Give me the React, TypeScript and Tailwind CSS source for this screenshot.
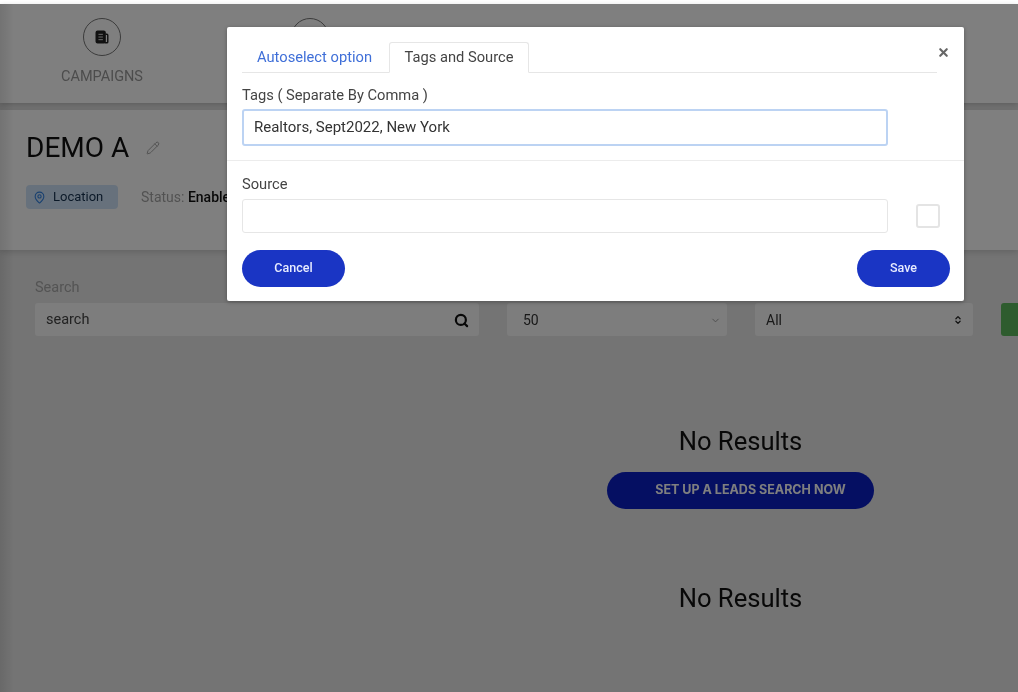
import React from 'react';
import { ChevronDown, ChevronsUpDown, MapPin, Pencil, Search, X } from 'lucide-react';

function NavItem({ label, children }: { label: string; children?: React.ReactNode }) {
    return (
        <div className="flex w-[128px] flex-col items-center">
            <div className="flex h-[38px] w-[38px] items-center justify-center rounded-full border-[1.5px] border-[#777]">
                {children}
            </div>
            <span className="mt-[13px] text-[14.5px] leading-[16px] text-[#999]">{label}</span>
        </div>
    );
}

function PageBehind() {
    return (
        <div className="flex h-[688px] flex-col bg-[#e8e8e8]">
            <div className="flex h-[99px] gap-[80px] bg-white pl-[38px] pt-[14px] shadow-[0_2px_6px_rgba(0,0,0,0.2)]">
                <NavItem label="CAMPAIGNS">
                    <svg width="16" height="16" viewBox="0 0 18 18" fill="none" stroke="#222" strokeWidth="1.6">
                        <rect x="2.5" y="2.5" width="10" height="13" rx="1.5" fill="#222" />
                        <path d="M13 6h1.5a1 1 0 0 1 1 1v7.5a1 1 0 0 1-1 1H12" />
                        <path d="M5 6h5M5 9h5M5 12h5" stroke="#ececec" strokeWidth="1" />
                    </svg>
                </NavItem>
                <NavItem label="" />
            </div>

            <div className="mt-[7px] h-[140px] bg-white pl-[26px] pt-[22px] shadow-[0_2px_6px_rgba(0,0,0,0.15)]">
                <div className="flex items-center gap-[17px]">
                    <h1 className="text-[28px] leading-[32px] text-[#111]">DEMO A</h1>
                    <Pencil size={14} strokeWidth={1.5} className="text-[#999]" />
                </div>
                <div className="mt-[21px] flex items-center gap-[23px]">
                    <div className="flex h-[24px] w-[92px] items-center gap-[7px] rounded-[4px] bg-[#cfe3f8] pl-[7px] text-[13px] text-[#15304f]">
                        <MapPin size={13} strokeWidth={2} className="text-[#2f7fe0]" />
                        Location
                    </div>
                    <div className="whitespace-nowrap text-[14px] text-[#a5a5a5]">
                        Status: <span className="font-medium text-[#111]">Enabled</span>
                    </div>
                </div>
            </div>

            <div className="flex gap-[28px] pl-[35px] pt-[28px]">
                <div className="w-[444px]">
                    <div className="text-[14.5px] leading-[20px] text-[#a8a8a8]">Search</div>
                    <div className="mt-[5px] flex h-[33px] items-center justify-between rounded-[3px] bg-[#fafafa] pl-[11px] pr-[10px] pt-[1px] text-[14.5px] text-[#444]">
                        search
                        <Search size={15} strokeWidth={3.5} className="text-[#111]" />
                    </div>
                </div>
                <div className="mt-[25px] flex h-[33px] w-[220px] items-center justify-between rounded-[3px] bg-[#fafafa] pl-[16px] pr-[6px] pt-[1px] text-[14px] text-[#333]">
                    50
                    <ChevronDown size={11} className="text-[#999]" />
                </div>
                <div className="mt-[25px] flex h-[33px] w-[218px] items-center justify-between rounded-[3px] bg-[#fafafa] pl-[11px] pr-[10px] pt-[1px] text-[14px] text-[#333]">
                    All
                    <ChevronsUpDown size={10} strokeWidth={3} className="text-[#222]" />
                </div>
                <div className="mt-[25px] h-[33px] flex-1 rounded-l-[3px] bg-[#5cb85c]" />
            </div>

            <div className="flex flex-col items-center pl-[463px] pt-[89px]">
                <div className="text-[25.6px] leading-[32px] text-[#111]">No Results</div>
                <button className="mt-[15px] h-[37px] w-[267px] rounded-full bg-[#0a1fc4] pl-[20px] font-['Inter',sans-serif] text-[12.5px] font-bold text-[#ffffff]">
                    SET UP A LEADS SEARCH NOW
                </button>
                <div className="mt-[73px] text-[25.6px] leading-[32px] text-[#111]">No Results</div>
            </div>
        </div>
    );
}

function TagsModal() {
    return (
        <div className="absolute left-[227px] top-[27px] h-[274px] w-[737px] rounded-[2px] bg-white shadow-[0_1px_4px_rgba(0,0,0,0.3)]">
            <div className="ml-[15px] mr-[27px] mt-[16px] flex h-[30px] items-end border-b border-[#e6e6e6]">
                <div className="flex h-[30px] w-[147px] items-center pl-[15px] text-[14.7px] text-[#3f6fd8]">
                    Autoselect option
                </div>
                <div className="-mb-px flex h-[31px] w-[140px] items-center justify-center rounded-t-[3px] border border-b-white border-[#e6e6e6] text-[14.7px] text-[#444]">
                    Tags and Source
                </div>
            </div>
            <X size={13} strokeWidth={4} className="absolute right-[14px] top-[19px] text-[#666]" />

            <div className="ml-[15px] mt-[12px] w-[646px]">
                <div className="text-[14.7px] leading-[20px] text-[#444]">Tags ( Separate By Comma )</div>
                <div className="mt-[4px] flex h-[37px] items-center rounded-[3px] border-2 border-[#bcd3f3] pl-[10px] text-[15px] text-[#333]">
                    Realtors, Sept2022, New York
                </div>
            </div>

            <div className="mt-[14px] border-t border-[#ececec]" />

            <div className="ml-[15px] mt-[13px] flex items-end">
                <div className="w-[646px]">
                    <div className="text-[14.7px] leading-[20px] text-[#444]">Source</div>
                    <div className="mt-[5px] h-[34px] rounded-[3px] border border-[#e6e6e6]" />
                </div>
                <div className="mb-[5px] ml-[28px] h-[24px] w-[24px] rounded-[3px] border-2 border-[#e4e4e4]" />
            </div>

            <div className="ml-[15px] mr-[14px] mt-[17px] flex justify-between">
                <button className="h-[37px] w-[103px] rounded-full bg-[#1a35c4] text-[12.5px] font-medium text-[#e8ecff]">
                    Cancel
                </button>
                <button className="h-[37px] w-[93px] rounded-full bg-[#1a35c4] text-[12.5px] font-medium text-[#e8ecff]">
                    Save
                </button>
            </div>
        </div>
    );
}

export default function App() {
    return (
        <div className="relative h-[692px] w-[1018px] overflow-hidden bg-white pt-[4px] font-['Roboto',sans-serif] blur-[0.5px]">
            <PageBehind />
            <div className="absolute inset-x-0 bottom-0 top-[4px] bg-black/50" />
            <div className="absolute inset-y-0 left-0 top-[4px] w-[14px] bg-gradient-to-r from-black/10 to-transparent" />
            <TagsModal />
        </div>
    );
}
